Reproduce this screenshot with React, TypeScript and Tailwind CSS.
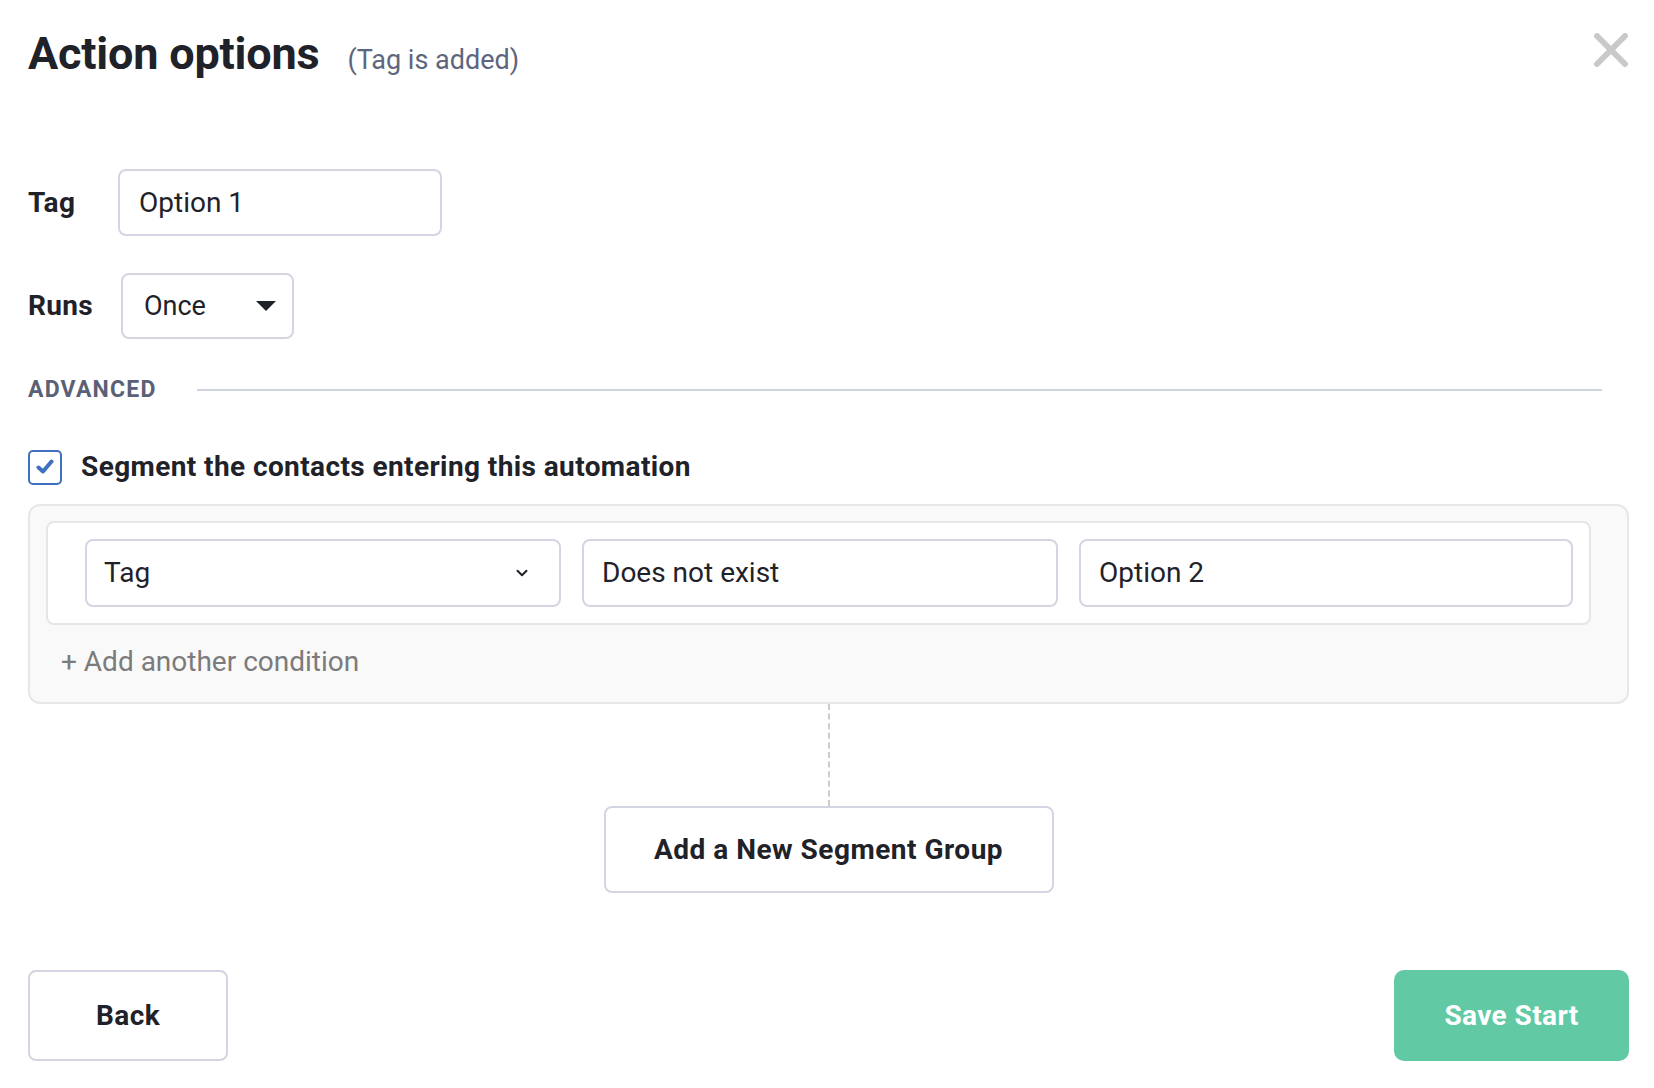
import { ChevronDown } from 'lucide-react';

export default function App() {
  return (
    <div className="min-h-screen bg-white pl-[28px] pr-[25px] font-['Roboto',sans-serif] text-[#1f2229]">
      {/* Header */}
      <div className="flex items-start justify-between pt-[26px]">
        <div className="flex items-baseline gap-[28px]">
          <h1 className="text-[45px] font-bold leading-[56px] tracking-[-0.2px]">Action options</h1>
          <span className="text-[27px] text-[#5d667d]">(Tag is added)</span>
        </div>
        <button className="mt-[7px]">
          <svg width="36" height="34" viewBox="0 0 36 34">
            <path d="M4 3 L32 31 M32 3 L4 31" stroke="#c9c9c9" strokeWidth="6" strokeLinecap="round" />
          </svg>
        </button>
      </div>

      {/* Tag */}
      <div className="mt-[87px] flex items-center">
        <label className="w-[90px] text-[28px] font-bold tracking-[0.3px]">Tag</label>
        <div className="flex h-[67px] w-[324px] items-center rounded-[8px] border-2 border-[#d3d6e2] pl-[19px] text-[28px]">
          Option 1
        </div>
      </div>

      {/* Runs */}
      <div className="mt-[37px] flex items-center">
        <label className="w-[93px] text-[28px] font-bold tracking-[0.3px]">Runs</label>
        <div className="flex h-[66px] w-[173px] items-center justify-between rounded-[8px] border-2 border-[#d3d6e2] pl-[21px] pr-[16px] text-[27px]">
          <span>Once</span>
          <svg width="20" height="10" viewBox="0 0 20 10">
            <path d="M0 0 L20 0 L10 10 Z" fill="#1f2229" />
          </svg>
        </div>
      </div>

      {/* Advanced */}
      <div className="mt-[36px] flex h-[30px] items-center">
        <span className="w-[169px] text-[23px] font-bold tracking-[1.2px] text-[#5a6176]">ADVANCED</span>
        <div className="mr-[27px] h-[2px] flex-1 bg-[#cfd3de]" />
      </div>

      <div className="mt-[41px] flex items-center gap-[19px]">
        <div className="flex h-[35px] w-[34px] items-center justify-center rounded-[5px] border-2 border-[#3f70bf] bg-white">
          <svg width="18" height="16" viewBox="0 0 18 16">
            <path d="M2.5 8.5 L7 12.5 L15.5 2.5" stroke="#3f70bf" strokeWidth="4" fill="none" strokeLinecap="round" strokeLinejoin="round" />
          </svg>
        </div>
        <span className="text-[28px] font-bold tracking-[0.4px]">Segment the contacts entering this automation</span>
      </div>

      {/* Segment group */}
      <div className="mt-[16px] rounded-[12px] border-2 border-[#e7e7e9] bg-[#f9f9f9] pb-[22px] pl-[16px] pr-[36px] pt-[15px]">
        <div className="flex gap-[21px] rounded-[8px] border-2 border-[#e6e6e8] bg-white py-[16px] pl-[37px] pr-[16px]">
          <div className="flex h-[68px] w-[476px] items-center justify-between rounded-[8px] border-2 border-[#d3d6e2] pl-[17px] pr-[28px] text-[28px]">
            <span>Tag</span>
            <ChevronDown size={18} strokeWidth={2.6} />
          </div>
          <div className="flex h-[68px] w-[476px] items-center rounded-[8px] border-2 border-[#d3d6e2] pl-[18px] text-[28px]">
            Does not exist
          </div>
          <div className="flex h-[68px] flex-1 items-center rounded-[8px] border-2 border-[#d3d6e2] pl-[18px] text-[28px]">
            Option 2
          </div>
        </div>
        <div className="mt-[19px] pl-[15px] text-[28px] leading-[36px] text-[#7b7b7b]">+ Add another condition</div>
      </div>

      {/* Connector + new group */}
      <div className="flex flex-col items-center">
        <div className="h-[102px] border-l-2 border-dashed border-[#cccccc]" />
        <button className="h-[87px] w-[450px] rounded-[8px] border-2 border-[#d3d6e2] bg-white text-[28px] font-bold tracking-[0.5px]">
          Add a New Segment Group
        </button>
      </div>

      {/* Footer */}
      <div className="mt-[77px] flex justify-between">
        <button className="h-[91px] w-[200px] rounded-[8px] border-2 border-[#d3d6e2] bg-white text-[28px] font-bold tracking-[0.4px]">
          Back
        </button>
        <button className="h-[91px] w-[235px] rounded-[10px] bg-[#62c9a5] text-[28px] font-bold tracking-[0.4px] text-white">
          Save Start
        </button>
      </div>
    </div>
  );
}
